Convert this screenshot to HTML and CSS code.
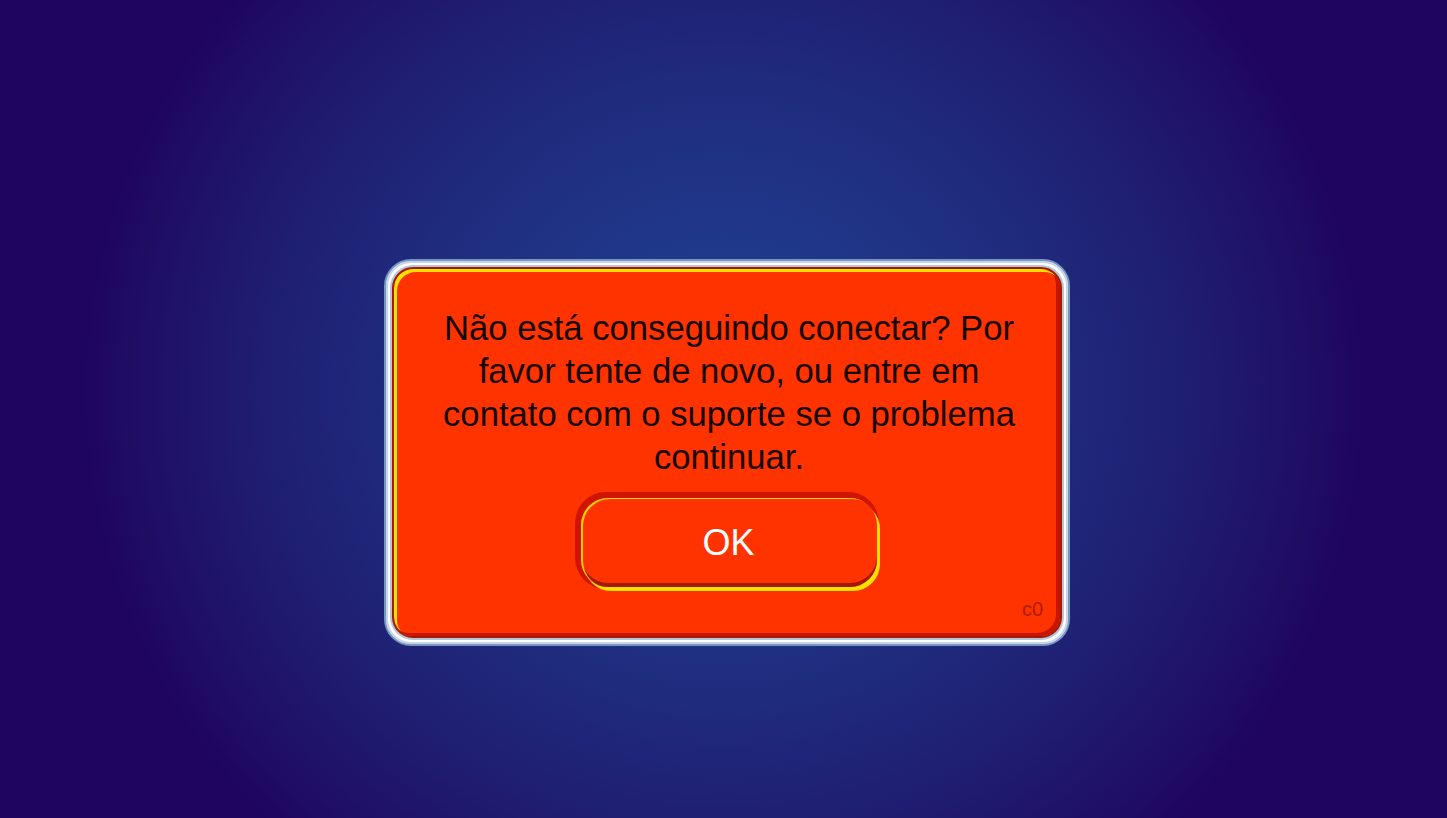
FILE: index.html
```html
<!DOCTYPE html>
<html lang="pt">
<head>
<meta charset="utf-8">
<title>Erro de conexão</title>
<link rel="stylesheet" href="styles.css">
</head>
<body>
<div class="stage">
  <div class="frame">
    <div class="panel">
      <p class="message">Não está conseguindo conectar? Por favor tente de novo, ou entre em contato com o suporte se o problema continuar.</p>
      <div class="actions">
        <button class="ok" type="button">OK</button>
      </div>
      <span class="code">c0</span>
    </div>
  </div>
</div>
</body>
</html>
```

FILE: styles.css
```css
html, body {
  margin: 0;
  padding: 0;
  height: 100%;
}

body {
  background-color: #1f0560;
  background-image: radial-gradient(ellipse 640px 610px at 50% 48%, #203f8e 0%, #20388a 25%, #1f2c7e 50%, #1f1c70 75%, #1f0d64 93%, #1f0560 100%);
  font-family: "Liberation Sans", Arial, sans-serif;
  overflow: hidden;
}

.stage {
  width: 1447px;
  height: 818px;
  display: flex;
  justify-content: center;
  align-items: flex-start;
  padding-top: 259px;
  padding-left: 7px;
  box-sizing: border-box;
}

.frame {
  width: 686px;
  height: 387px;
  box-sizing: border-box;
  border: 2px solid #7896c0;
  border-radius: 27px;
  background: #ffffff;
  box-shadow: inset 0 0 0 2px #c6d5e8;
  padding: 6px;
}

.panel {
  position: relative;
  height: 100%;
  box-sizing: border-box;
  border-radius: 21px;
  background: #ff3300;
  border: 2px solid #a81a00;
  box-shadow:
    0 0 0 2px #b3c6de,
    inset 3px 3px 0 #ffe000,
    inset -4px -3px 0 #c81500;
  padding: 38px 30px 0 30px;
  display: flex;
  flex-direction: column;
  align-items: center;
}

.message {
  margin: 0;
  width: 600px;
  box-sizing: border-box;
  padding-left: 4px;
  text-align: center;
  font-size: 34.65px;
  line-height: 43px;
  color: #140600;
}

.actions {
  margin-top: 19px;
  display: flex;
  justify-content: center;
  padding-left: 3px;
}

.ok {
  width: 296px;
  height: 89px;
  border: none;
  border-radius: 27px;
  background: #ff3300;
  color: #ffffff;
  font-family: "Liberation Sans", Arial, sans-serif;
  font-size: 36px;
  padding: 0;
  box-shadow:
    inset 2px 1px 0 #ffd200,
    inset 0 -4px 0 #a51800,
    3px 4px 0 0 #ffe100,
    -2px -2px 0 4px #cf1400;
  cursor: pointer;
}

.code {
  position: absolute;
  right: 17px;
  bottom: 15px;
  font-size: 20px;
  color: #b01c00;
}
```
